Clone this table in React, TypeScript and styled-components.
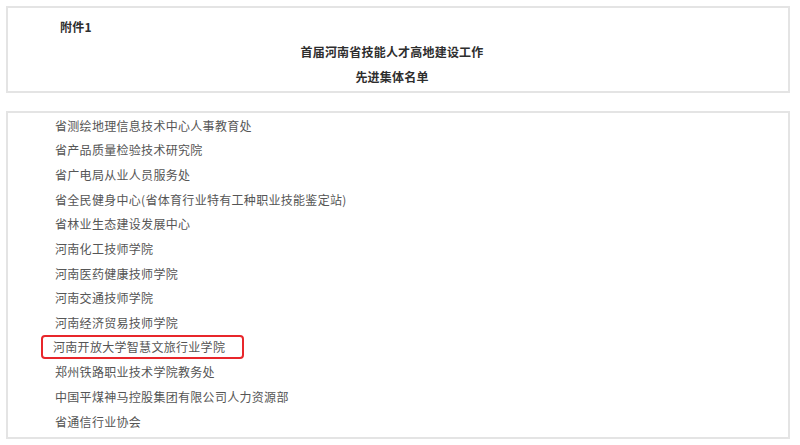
import React from "react";
import styled, { createGlobalStyle } from "styled-components";

const Global = createGlobalStyle`
  html, body { margin: 0; padding: 0; background: #ffffff; }
  body { font-family: "Noto Sans CJK SC", "Liberation Serif", serif; }
`;

const Page = styled.div`
  width: 800px;
  height: 445px;
  box-sizing: border-box;
  padding: 6px 10px 0 6px;
  display: flex;
  flex-direction: column;
  gap: 18px;
`;

const Panel = styled.section<{ $pt: number; $pb: number }>`
  box-sizing: border-box;
  border: 2px solid #e4e4e4;
  padding: ${(p) => p.$pt}px 0 ${(p) => p.$pb}px 0;
  display: flex;
  flex-direction: column;
`;

const Annex = styled.div`
  height: 25px;
  line-height: 25px;
  padding-left: 52px;
  font-size: 12px;
  font-weight: 700;
  color: #2e2e2e;
  letter-spacing: 0.3px;
`;

const TitleLine = styled.div`
  height: 25px;
  line-height: 25px;
  text-align: center;
  padding-right: 12px;
  font-size: 12px;
  font-weight: 700;
  color: #2e2e2e;
  letter-spacing: 0.2px;
`;

const Row = styled.div`
  height: 24.67px;
  display: flex;
  align-items: center;
  padding-left: 47px;
`;

const Label = styled.span<{ $highlight?: boolean }>`
  font-size: 12px;
  letter-spacing: 0.3px;
  color: #555555;
  line-height: 19px;
  box-sizing: border-box;
  ${(p) =>
    p.$highlight
      ? `
    border: 2px solid #e8262b;
    border-radius: 4px;
    height: 24px;
    line-height: 20px;
    margin-left: -14px;
    padding: 0 17px 0 10px;
  `
      : ""}
`;

const items = [
  "省测绘地理信息技术中心人事教育处",
  "省产品质量检验技术研究院",
  "省广电局从业人员服务处",
  "省全民健身中心(省体育行业特有工种职业技能鉴定站)",
  "省林业生态建设发展中心",
  "河南化工技师学院",
  "河南医药健康技师学院",
  "河南交通技师学院",
  "河南经济贸易技师学院",
  "河南开放大学智慧文旅行业学院",
  "郑州铁路职业技术学院教务处",
  "中国平煤神马控股集团有限公司人力资源部",
  "省通信行业协会",
];

export default function App() {
  return (
    <>
      <Global />
      <Page>
        <Panel $pt={6} $pb={2}>
          <Annex>附件1</Annex>
          <TitleLine>首届河南省技能人才高地建设工作</TitleLine>
          <TitleLine>先进集体名单</TitleLine>
        </Panel>
        <Panel $pt={0} $pb={3}>
          {items.map((t, i) => (
            <Row key={t}>
              <Label $highlight={i === 9}>{t}</Label>
            </Row>
          ))}
        </Panel>
      </Page>
    </>
  );
}
